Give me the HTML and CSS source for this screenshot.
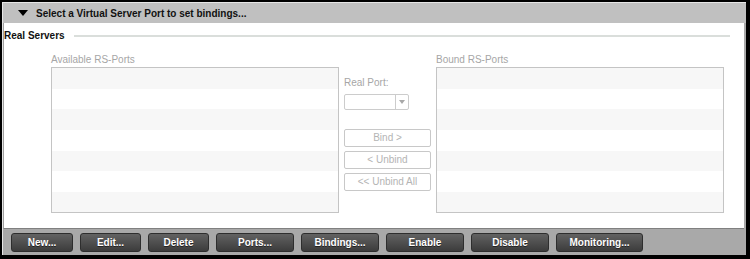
FILE: index.html
```html
<!DOCTYPE html>
<html>
<head>
<meta charset="utf-8">
<link rel="stylesheet" href="styles.css">
</head>
<body>
<div class="window">
  <div class="panel">
    <div class="header">
      <span class="caret"></span>
      <span class="header-title">Select a Virtual Server Port to set bindings...</span>
    </div>
    <div class="content">
      <div class="section-title">
        <span class="section-label">Real Servers</span>
        <span class="section-rule"></span>
      </div>
      <div class="binding-grid">
        <div class="list-col">
          <div class="list-label">Available RS-Ports</div>
          <div class="list">
            <div class="row"></div><div class="row"></div><div class="row"></div><div class="row"></div><div class="row"></div><div class="row"></div><div class="row"></div>
          </div>
        </div>
        <div class="mid-col">
          <div class="port-label">Real Port:</div>
          <div class="combo">
            <span class="combo-field"></span>
            <span class="combo-btn"><span class="combo-arrow"></span></span>
          </div>
          <div class="mid-buttons">
            <div class="mid-btn">Bind &gt;</div>
            <div class="mid-btn">&lt; Unbind</div>
            <div class="mid-btn">&lt;&lt; Unbind All</div>
          </div>
        </div>
        <div class="list-col">
          <div class="list-label">Bound RS-Ports</div>
          <div class="list">
            <div class="row"></div><div class="row"></div><div class="row"></div><div class="row"></div><div class="row"></div><div class="row"></div><div class="row"></div>
          </div>
        </div>
      </div>
    </div>
    <div class="toolbar">
      <div class="tb-btn w62">New...</div>
      <div class="tb-btn w61">Edit...</div>
      <div class="tb-btn w61">Delete</div>
      <div class="tb-btn w78">Ports...</div>
      <div class="tb-btn w78">Bindings...</div>
      <div class="tb-btn w78">Enable</div>
      <div class="tb-btn w78">Disable</div>
      <div class="tb-btn w87">Monitoring...</div>
    </div>
  </div>
</div>
</body>
</html>
```

FILE: styles.css
```css
html, body {
  margin: 0;
  padding: 0;
  background: #ffffff;
}
body {
  font-family: "Liberation Sans", Arial, sans-serif;
  font-size: 10px;
}
.window {
  width: 750px;
  height: 259px;
  box-sizing: border-box;
  background: #000;
  padding: 2px 4px 4px 2px;
}
.panel {
  height: 100%;
  box-sizing: border-box;
  display: flex;
  flex-direction: column;
  background: #a9a9a9;
  border-top: 1px solid #e6e6e6;
  border-left: 1px solid #e6e6e6;
}
.header {
  height: 20px;
  flex: none;
  background: #c0c0c0;
  display: flex;
  align-items: center;
  padding-left: 15px;
}
.caret {
  width: 0;
  height: 0;
  border-left: 5px solid transparent;
  border-right: 5px solid transparent;
  border-top: 6px solid #000;
  margin-right: 8px;
}
.header-title {
  color: #111;
  font-weight: bold;
  font-size: 10px;
}
.content {
  flex: 1;
  background: #fff;
  margin-right: 2px;
  border-left: 1px solid #a0a0a0;
  border-bottom: 1px solid #808080;
  padding-top: 6px;
}
.section-title {
  display: flex;
  align-items: center;
  height: 12px;
}
.section-label {
  font-weight: bold;
  color: #111;
}
.section-rule {
  width: 656px;
  height: 2px;
  background: #dadedb;
  margin-left: 9px;
  margin-top: 1px;
}
.binding-grid {
  display: flex;
  padding-left: 47px;
  margin-top: 11px;
  gap: 5px;
}
.list-col {
  width: 288px;
}
.list-label {
  color: #a6a6a6;
  height: 12px;
  line-height: 12px;
  padding-top: 2px;
  margin-bottom: 1px;
}
.list {
  height: 146px;
  box-sizing: border-box;
  border: 1px solid #c4c4c4;
  overflow: hidden;
}
.row {
  height: 20.7px;
}
.row:nth-child(odd) {
  background: #f7f7f7;
}
.mid-col {
  width: 87px;
  padding-top: 24px;
}
.port-label {
  color: #a6a6a6;
  height: 14px;
  line-height: 14px;
  margin-bottom: 4px;
}
.combo {
  width: 65px;
  height: 16px;
  box-sizing: border-box;
  border: 1px solid #cccccc;
  border-radius: 2px;
  display: flex;
}
.combo-field {
  flex: 1;
}
.combo-btn {
  width: 12px;
  border-left: 1px solid #cccccc;
  display: flex;
  align-items: center;
  justify-content: center;
}
.combo-arrow {
  width: 0;
  height: 0;
  border-left: 3px solid transparent;
  border-right: 3px solid transparent;
  border-top: 4px solid #a8a8a8;
}
.mid-buttons {
  margin-top: 19px;
  display: flex;
  flex-direction: column;
  gap: 4px;
}
.mid-btn {
  width: 87px;
  height: 18px;
  box-sizing: border-box;
  border: 1px solid #c8c8c8;
  border-radius: 2px;
  color: #b4b4b4;
  text-align: center;
  line-height: 16px;
}
.toolbar {
  height: 26px;
  flex: none;
  display: flex;
  align-items: center;
  gap: 7px;
  padding-left: 8px;
  padding-top: 1px;
  box-sizing: border-box;
}
.tb-btn {
  height: 19px;
  box-sizing: border-box;
  border: 1px solid #2e2e2e;
  border-radius: 3px;
  background: linear-gradient(#626262, #3c3c3c);
  color: #fff;
  font-weight: bold;
  font-size: 10px;
  text-align: center;
  line-height: 17px;
  text-shadow: 0 1px 0 #222;
}
.w62 { width: 62px; }
.w61 { width: 61px; }
.w78 { width: 78px; }
.w87 { width: 87px; }
```
